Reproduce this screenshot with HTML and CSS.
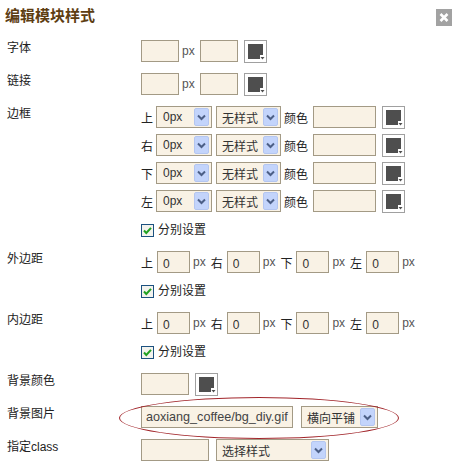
FILE: index.html
```html
<!DOCTYPE html>
<html>
<head>
  <title>编辑模块样式</title>
  <link rel="stylesheet" href="styles.css">
</head>
<body>
  <div class="panel">
    <div class="head">
      <h2>编辑模块样式</h2>
      <span class="close">
        <svg width="16" height="17" viewBox="0 0 16 17"><rect width="16" height="17" fill="#a2a2a2"/><path d="M4.5 5 L11.5 12 M11.5 5 L4.5 12" stroke="#fff" stroke-width="2.6"/></svg>
      </span>
    </div>

    <div class="row">
      <span class="lab">字体</span>
      <div class="fields">
        <input class="txt w38" type="text"><span class="unit">px</span><input class="txt w38" type="text">
        <span class="swatch"><svg width="21" height="21" viewBox="0 0 21 21"><path d="M3 3 H18 V14 H15 V18 H3 Z" fill="#4e4e4e"/><path d="M15.5 16 H19.5 L17.5 18.5 Z" fill="#4e4e4e"/></svg></span>
      </div>
    </div>

    <div class="row">
      <span class="lab">链接</span>
      <div class="fields">
        <input class="txt w38" type="text"><span class="unit">px</span><input class="txt w38" type="text">
        <span class="swatch"><svg width="21" height="21" viewBox="0 0 21 21"><path d="M3 3 H18 V14 H15 V18 H3 Z" fill="#4e4e4e"/><path d="M15.5 16 H19.5 L17.5 18.5 Z" fill="#4e4e4e"/></svg></span>
      </div>
    </div>

    <div class="row">
      <span class="lab">边框</span>
      <div class="stack">
        <div class="fields">
          <span class="side">上</span>
          <span class="sel w56"><span>0px</span><svg class="arr" width="15" height="18" viewBox="0 0 15 18"><rect x="0.5" y="0.5" width="14" height="17" rx="1.5" fill="#c3d4fb" stroke="#b4c6f0"/><path d="M4 7.5 L7.5 11 L11 7.5" fill="none" stroke="#4c5f86" stroke-width="2"/></svg></span>
          <span class="sel w65"><span>无样式</span><svg class="arr" width="15" height="18" viewBox="0 0 15 18"><rect x="0.5" y="0.5" width="14" height="17" rx="1.5" fill="#c3d4fb" stroke="#b4c6f0"/><path d="M4 7.5 L7.5 11 L11 7.5" fill="none" stroke="#4c5f86" stroke-width="2"/></svg></span>
          <span class="side">颜色</span>
          <input class="txt w63" type="text">
          <span class="swatch"><svg width="21" height="21" viewBox="0 0 21 21"><path d="M3 3 H18 V14 H15 V18 H3 Z" fill="#4e4e4e"/><path d="M15.5 16 H19.5 L17.5 18.5 Z" fill="#4e4e4e"/></svg></span>
        </div>
        <div class="fields">
          <span class="side">右</span>
          <span class="sel w56"><span>0px</span><svg class="arr" width="15" height="18" viewBox="0 0 15 18"><rect x="0.5" y="0.5" width="14" height="17" rx="1.5" fill="#c3d4fb" stroke="#b4c6f0"/><path d="M4 7.5 L7.5 11 L11 7.5" fill="none" stroke="#4c5f86" stroke-width="2"/></svg></span>
          <span class="sel w65"><span>无样式</span><svg class="arr" width="15" height="18" viewBox="0 0 15 18"><rect x="0.5" y="0.5" width="14" height="17" rx="1.5" fill="#c3d4fb" stroke="#b4c6f0"/><path d="M4 7.5 L7.5 11 L11 7.5" fill="none" stroke="#4c5f86" stroke-width="2"/></svg></span>
          <span class="side">颜色</span>
          <input class="txt w63" type="text">
          <span class="swatch"><svg width="21" height="21" viewBox="0 0 21 21"><path d="M3 3 H18 V14 H15 V18 H3 Z" fill="#4e4e4e"/><path d="M15.5 16 H19.5 L17.5 18.5 Z" fill="#4e4e4e"/></svg></span>
        </div>
        <div class="fields">
          <span class="side">下</span>
          <span class="sel w56"><span>0px</span><svg class="arr" width="15" height="18" viewBox="0 0 15 18"><rect x="0.5" y="0.5" width="14" height="17" rx="1.5" fill="#c3d4fb" stroke="#b4c6f0"/><path d="M4 7.5 L7.5 11 L11 7.5" fill="none" stroke="#4c5f86" stroke-width="2"/></svg></span>
          <span class="sel w65"><span>无样式</span><svg class="arr" width="15" height="18" viewBox="0 0 15 18"><rect x="0.5" y="0.5" width="14" height="17" rx="1.5" fill="#c3d4fb" stroke="#b4c6f0"/><path d="M4 7.5 L7.5 11 L11 7.5" fill="none" stroke="#4c5f86" stroke-width="2"/></svg></span>
          <span class="side">颜色</span>
          <input class="txt w63" type="text">
          <span class="swatch"><svg width="21" height="21" viewBox="0 0 21 21"><path d="M3 3 H18 V14 H15 V18 H3 Z" fill="#4e4e4e"/><path d="M15.5 16 H19.5 L17.5 18.5 Z" fill="#4e4e4e"/></svg></span>
        </div>
        <div class="fields">
          <span class="side">左</span>
          <span class="sel w56"><span>0px</span><svg class="arr" width="15" height="18" viewBox="0 0 15 18"><rect x="0.5" y="0.5" width="14" height="17" rx="1.5" fill="#c3d4fb" stroke="#b4c6f0"/><path d="M4 7.5 L7.5 11 L11 7.5" fill="none" stroke="#4c5f86" stroke-width="2"/></svg></span>
          <span class="sel w65"><span>无样式</span><svg class="arr" width="15" height="18" viewBox="0 0 15 18"><rect x="0.5" y="0.5" width="14" height="17" rx="1.5" fill="#c3d4fb" stroke="#b4c6f0"/><path d="M4 7.5 L7.5 11 L11 7.5" fill="none" stroke="#4c5f86" stroke-width="2"/></svg></span>
          <span class="side">颜色</span>
          <input class="txt w63" type="text">
          <span class="swatch"><svg width="21" height="21" viewBox="0 0 21 21"><path d="M3 3 H18 V14 H15 V18 H3 Z" fill="#4e4e4e"/><path d="M15.5 16 H19.5 L17.5 18.5 Z" fill="#4e4e4e"/></svg></span>
        </div>
      </div>
    </div>

    <div class="row check">
      <span class="lab"></span>
      <label class="cb"><svg width="13" height="13" viewBox="0 0 13 13"><rect x="0.5" y="0.5" width="12" height="12" fill="#f3f3ee" stroke="#1c5180"/><path d="M3 6.5 L5.3 9 L10 3.8" fill="none" stroke="#21a121" stroke-width="2"/></svg>分别设置</label>
    </div>

    <div class="row">
      <span class="lab">外边距</span>
      <div class="fields">
        <span class="side">上</span><input class="txt w33" type="text" value="0"><span class="unit2">px</span>
        <span class="side">右</span><input class="txt w33" type="text" value="0"><span class="unit2">px</span>
        <span class="side">下</span><input class="txt w33" type="text" value="0"><span class="unit2">px</span>
        <span class="side">左</span><input class="txt w33" type="text" value="0"><span class="unit2">px</span>
      </div>
    </div>

    <div class="row check">
      <span class="lab"></span>
      <label class="cb"><svg width="13" height="13" viewBox="0 0 13 13"><rect x="0.5" y="0.5" width="12" height="12" fill="#f3f3ee" stroke="#1c5180"/><path d="M3 6.5 L5.3 9 L10 3.8" fill="none" stroke="#21a121" stroke-width="2"/></svg>分别设置</label>
    </div>

    <div class="row">
      <span class="lab">内边距</span>
      <div class="fields">
        <span class="side">上</span><input class="txt w33" type="text" value="0"><span class="unit2">px</span>
        <span class="side">右</span><input class="txt w33" type="text" value="0"><span class="unit2">px</span>
        <span class="side">下</span><input class="txt w33" type="text" value="0"><span class="unit2">px</span>
        <span class="side">左</span><input class="txt w33" type="text" value="0"><span class="unit2">px</span>
      </div>
    </div>

    <div class="row check">
      <span class="lab"></span>
      <label class="cb"><svg width="13" height="13" viewBox="0 0 13 13"><rect x="0.5" y="0.5" width="12" height="12" fill="#f3f3ee" stroke="#1c5180"/><path d="M3 6.5 L5.3 9 L10 3.8" fill="none" stroke="#21a121" stroke-width="2"/></svg>分别设置</label>
    </div>

    <div class="row">
      <span class="lab">背景颜色</span>
      <div class="fields">
        <input class="txt w48" type="text">
        <span class="swatch"><svg width="21" height="21" viewBox="0 0 21 21"><path d="M3 3 H18 V14 H15 V18 H3 Z" fill="#4e4e4e"/><path d="M15.5 16 H19.5 L17.5 18.5 Z" fill="#4e4e4e"/></svg></span>
      </div>
    </div>

    <div class="row bgimg">
      <span class="lab">背景图片</span>
      <div class="fields">
        <input class="txt w152 path" type="text" value="aoxiang_coffee/bg_diy.gif">
        <span class="sel w77 gap8"><span>横向平铺</span><svg class="arr" width="15" height="18" viewBox="0 0 15 18"><rect x="0.5" y="0.5" width="14" height="17" rx="1.5" fill="#c3d4fb" stroke="#b4c6f0"/><path d="M4 7.5 L7.5 11 L11 7.5" fill="none" stroke="#4c5f86" stroke-width="2"/></svg></span>
      </div>
      <span class="ring"></span>
    </div>

    <div class="row">
      <span class="lab">指定class</span>
      <div class="fields">
        <input class="txt w68" type="text">
        <span class="sel w113 gap7"><span>选择样式</span><svg class="arr" width="15" height="18" viewBox="0 0 15 18"><rect x="0.5" y="0.5" width="14" height="17" rx="1.5" fill="#c3d4fb" stroke="#b4c6f0"/><path d="M4 7.5 L7.5 11 L11 7.5" fill="none" stroke="#4c5f86" stroke-width="2"/></svg></span>
      </div>
    </div>
  </div>
</body>
</html>
```

FILE: styles.css
```css
* {
  box-sizing: border-box;
}
body {
  margin: 0;
  background: #fff;
  font-family: "Liberation Sans", "Noto Sans CJK SC", sans-serif;
  font-size: 12px;
  color: #222;
}
.panel {
  width: 452px;
}
.head {
  display: flex;
  justify-content: space-between;
  height: 40px;
  padding: 4px 0 0 5px;
}
.head h2 {
  margin: 0;
  font-family: "Noto Sans CJK SC", sans-serif;
  font-size: 15px;
  line-height: 22px;
  font-weight: bold;
  color: #5d3d12;
}
.close {
  margin-top: 5px;
  width: 16px;
  height: 17px;
}
.close svg {
  display: block;
}
.row {
  display: flex;
  align-items: flex-start;
  margin-bottom: 11px;
}
.lab {
  flex: none;
  width: 141px;
  padding-left: 7px;
  line-height: 16px;
}
.stack {
  display: flex;
  flex-direction: column;
  gap: 6px;
}
.fields {
  display: flex;
  align-items: center;
  height: 22px;
}
.txt {
  height: 22px;
  margin: 0;
  padding: 0 4px;
  border: 1px solid #a39a85;
  background: #f9f2e5;
  font-family: "Liberation Sans", sans-serif;
  font-size: 12px;
  color: #333;
  outline: none;
}
.w33 { width: 33px; padding-left: 5px; padding-top: 3px; }
.w38 { width: 38px; }
.w48 { width: 48px; }
.w63 { width: 63px; }
.w68 { width: 68px; }
.w152 { width: 152px; }
.path {
  padding: 0 2px 0 4px;
  font-size: 12.6px;
  color: #444;
}
.unit {
  margin: 0 5px 0 3px;
  color: #555;
}
.unit2 {
  margin: 0 5px 0 3px;
  color: #555;
}
.unit2:last-child {
  margin-right: 0;
}
.side {
  margin-right: 3px;
  color: #222;
}
.fields .txt + .side,
.sel + .side {
  margin-left: 3px;
}
.side + .txt {
  margin-left: 1px;
}
.sel + .sel {
  margin-left: 4px;
}
.side + .txt.w63 {
  margin-left: 2px;
}
.swatch {
  width: 23px;
  height: 23px;
  margin-left: 6px;
  border: 1px solid #a0a0a0;
  background: #fff;
}
.swatch svg,
.arr {
  display: block;
}
.sel {
  display: flex;
  align-items: center;
  justify-content: space-between;
  height: 22px;
  padding: 0 2px 0 5px;
  border: 1px solid #a39a85;
  background: #f9f2e5;
  color: #333;
}
.w56 { width: 56px; padding-left: 6px; }
.w65 { width: 65px; }
.w77 { width: 77px; }
.w113 { width: 113px; }
.gap8 { margin-left: 8px; }
.gap7 { margin-left: 7px; }
.check {
  height: 17px;
}
.cb {
  display: flex;
  align-items: center;
  gap: 4px;
  margin-top: 1px;
  line-height: 13px;
}
.bgimg {
  position: relative;
}
.ring {
  position: absolute;
  left: 119px;
  top: -9px;
  width: 280px;
  height: 42px;
  border: 1px solid #a2262b;
  border-radius: 50%;
  pointer-events: none;
}
```
